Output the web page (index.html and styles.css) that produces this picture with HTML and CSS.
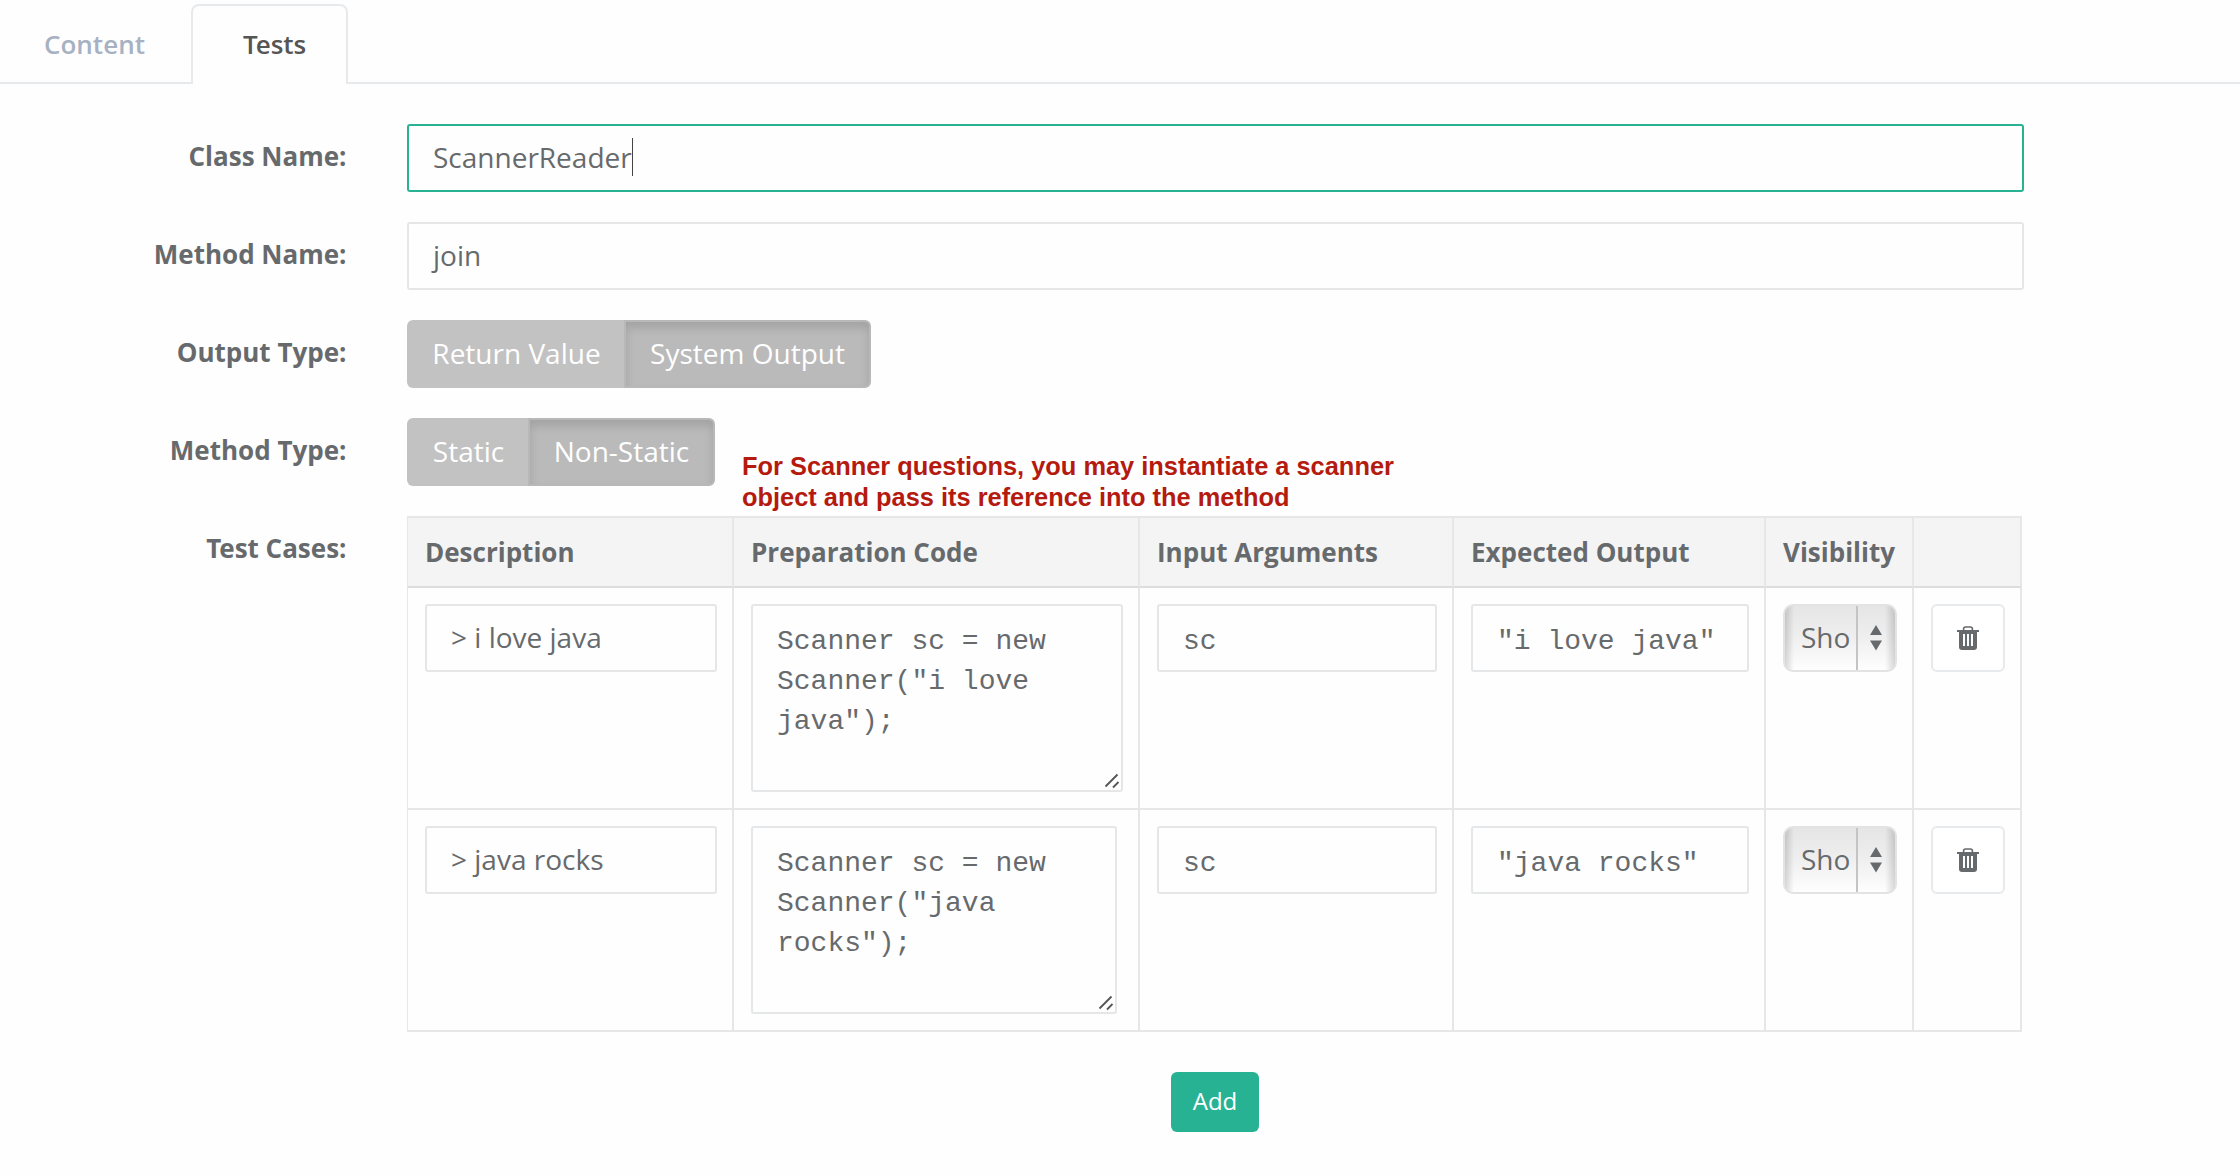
FILE: index.html
```html
<!DOCTYPE html>
<html lang="en">
<head>
<meta charset="utf-8">
<title>Tests</title>
<link rel="stylesheet" href="styles.css">
</head>
<body>
<svg class="sprite" aria-hidden="true">
  <symbol id="trash" viewBox="0 0 22 24">
    <path fill="none" stroke="currentColor" stroke-width="1.6" d="M6.6 4.5V3q0-2 2-2h4.800q2 0 2 2v1.500"/>
    <path fill="currentColor" d="M0 4h22v2H0z"/>
    <path fill="currentColor" fill-rule="evenodd" d="M2 6h18v15q0 3-3 3H5q-3 0-3-3zM6 8v12h2V8zM10 8v12h2V8zM14 8v12h2V8z"/>
  </symbol>
  <symbol id="grip" viewBox="0 0 16 16">
    <path fill="none" stroke="currentColor" stroke-width="1.800" d="M1.500 13.500 13.500 1.500M9 14.500 14.500 9"/>
  </symbol>
  <symbol id="updown" viewBox="0 0 12 26">
    <path fill="currentColor" d="M6 0 12 10H0zM0 15.500h12L6 25.500z"/>
  </symbol>
</svg>

<nav class="tabs">
  <a class="tab">Content</a>
  <a class="tab active"><span class="kern">T</span>ests</a>
</nav>

<main class="form">
  <div class="row">
    <label class="label">Class Name:</label>
    <div class="field wide focus">ScannerReader<span class="caret"></span></div>
  </div>
  <div class="row">
    <label class="label">Method Name:</label>
    <div class="field wide">join</div>
  </div>
  <div class="row">
    <label class="label">Output Type:</label>
    <div class="toggle">
      <button class="option return">Return Value</button><button class="option on output">System Output</button>
    </div>
  </div>
  <div class="row">
    <label class="label">Method Type:</label>
    <div class="toggle">
      <button class="option static">Static</button><button class="option on nonstatic">Non-Static</button>
      <p class="note"><span>For Scanner questions, you may instantiate a scanner</span><br><span>object and pass its reference into the method</span></p>
    </div>
  </div>
  <div class="row">
    <label class="label"><span class="kern">T</span>est Cases:</label>
    <div class="cases">
      <table class="grid">
        <colgroup><col class="c1"><col class="c2"><col class="c3"><col class="c4"><col class="c5"><col class="c6"></colgroup>
        <thead>
          <tr><th>Description</th><th>Preparation Code</th><th>Input Arguments</th><th>Expected Output</th><th>Visibility</th><th></th></tr>
        </thead>
        <tbody>
          <tr>
            <td><div class="field">&gt; i love java</div></td>
            <td><div class="field code area">Scanner sc = new<br>Scanner("i love<br>java");<svg class="grip"><use href="#grip"/></svg></div></td>
            <td><div class="field code">sc</div></td>
            <td><div class="field code">"i love java"</div></td>
            <td><div class="select"><span class="value">Sho</span><span class="arrows"><svg><use href="#updown"/></svg></span></div></td>
            <td><button class="remove"><svg><use href="#trash"/></svg></button></td>
          </tr>
          <tr>
            <td><div class="field">&gt; java rocks</div></td>
            <td><div class="field code area short">Scanner sc = new<br>Scanner("java<br>rocks");<svg class="grip"><use href="#grip"/></svg></div></td>
            <td><div class="field code">sc</div></td>
            <td><div class="field code">"java rocks"</div></td>
            <td><div class="select"><span class="value">Sho</span><span class="arrows"><svg><use href="#updown"/></svg></span></div></td>
            <td><button class="remove"><svg><use href="#trash"/></svg></button></td>
          </tr>
        </tbody>
      </table>
      <button class="add">Add</button>
    </div>
  </div>
</main>
</body>
</html>
```
FILE: styles.css
```css
* { box-sizing: border-box; }
body {
  margin: 0;
  height: 1176px;
  overflow: hidden;
  background: #fefefe;
  color: #676a6c;
  font: 400 26px/40px "Open Sans", sans-serif;
}
.sprite { display: none; }
button { font: inherit; color: inherit; margin: 0; padding: 0; border: 0; }
.kern { letter-spacing: -2px; }

.tabs {
  display: flex;
  align-items: flex-end;
  height: 84px;
  padding-top: 4px;
  box-shadow: inset 0 -2px #e7eaec;
}
.tab {
  height: 80px;
  padding: 20px 0 0 44px;
  width: 191px;
  font-weight: 600;
  color: #a7b1c2;
}
.tab.active {
  width: 157px;
  padding-left: 50px;
  color: #555;
  background: #fefefe;
  border: 2px solid #e7eaec;
  border-bottom: 0;
  border-radius: 8px 8px 0 0;
  padding-top: 18px;
}

.form {
  display: flex;
  flex-direction: column;
  gap: 30px;
  padding-top: 40px;
}
.row { display: flex; gap: 60.5px; min-height: 68px; }
.label {
  width: 346.5px;
  padding-top: 12px;
  text-align: right;
  font-weight: 700;
}
.field {
  height: 68px;
  padding: 11px 24px;
  border: 2px solid #e5e6e7;
  border-radius: 3px;
  font-size: 28px;
  white-space: nowrap;
}
.wide { width: 1617px; }
.focus { border-color: #28b294; }
.caret {
  display: inline-block;
  width: 1px;
  height: 38px;
  vertical-align: -8px;
  background: #444;
}

.toggle { display: flex; position: relative; }
.option {
  height: 68px;
  padding-bottom: 2px;
  background: #c2c2c2;
  color: #fff;
  font-size: 28px;
  border-radius: 6px 0 0 6px;
  white-space: nowrap;
}
.option.on {
  background: #bababa;
  border: 2px solid #b8b8b8;
  box-shadow: inset 0 6px 10px rgba(0, 0, 0, .125);
  border-radius: 0 6px 6px 0;
}
.return { width: 217px; padding-left: 2px; }
.output { width: 247px; }
.static { width: 121px; padding-left: 2px; }
.nonstatic { width: 187px; }
.note {
  position: absolute;
  left: 335px;
  top: 33px;
  margin: 0;
  white-space: nowrap;
  color: #b51a0f;
  font: 700 25.4px/31px "Liberation Sans", Arial, sans-serif;
}

.cases { display: flex; flex-direction: column; align-items: flex-start; }
.grid {
  width: 1615px;
  table-layout: fixed;
  border-collapse: separate;
  border-spacing: 0;
}
.c1 { width: 327px; }
.c2 { width: 406px; }
.c3 { width: 314px; }
.c4 { width: 312px; }
.c5 { width: 148px; }
.c6 { width: 108px; }
th, td {
  padding: 16px 15px 16px 17px;
  border-right: 2px solid #e7e7e7;
  border-bottom: 2px solid #e7e7e7;
  vertical-align: top;
  text-align: left;
}
th:first-child, td:first-child { border-left: 1px solid #e7e7e7; }
th {
  height: 72px;
  padding-top: 14px;
  padding-bottom: 0;
  border-top: 2px solid #e7e7e7;
  border-bottom-color: #ddd;
  background: #f4f4f4;
  font-weight: 700;
  white-space: nowrap;
}
td { height: 222px; }
.code {
  padding-top: 16px;
  font-family: "Liberation Mono", "Courier New", monospace;
}
.area { position: relative; height: 188px; }
.short { width: 366px; }
.grip { position: absolute; right: 1px; bottom: 1px; width: 16px; height: 16px; color: #555; }

.select {
  display: flex;
  width: 114px;
  height: 68px;
  border: 2px solid #e2e3e4;
  border-radius: 10px;
  background:
    linear-gradient(90deg, rgba(0,0,0,.15), transparent 9px, transparent calc(100% - 10px), rgba(0,0,0,.15)),
    linear-gradient(#e5e5e5, #efefef 50%, #fefefe);
  font-size: 28px;
}
.value { width: 73px; padding: 11px 0 0 16px; border-right: 2px solid #c4c4c4; }
.arrows { flex: 1; padding: 19px 0 0 12px; line-height: 0; }
.arrows svg { width: 12px; height: 26px; }
.remove {
  display: flex;
  align-items: center;
  justify-content: center;
  width: 74px;
  height: 68px;
  background: #fff;
  border: 2px solid #e7eaec;
  border-radius: 6px;
}
.remove svg { width: 22px; height: 24px; }
.add {
  align-self: flex-start;
  margin: 40px 0 0 764px;
  width: 88px;
  height: 60px;
  padding-bottom: 2px;
  border-radius: 6px;
  background: #28b294;
  color: #fff;
  font-size: 24px;
}
```
